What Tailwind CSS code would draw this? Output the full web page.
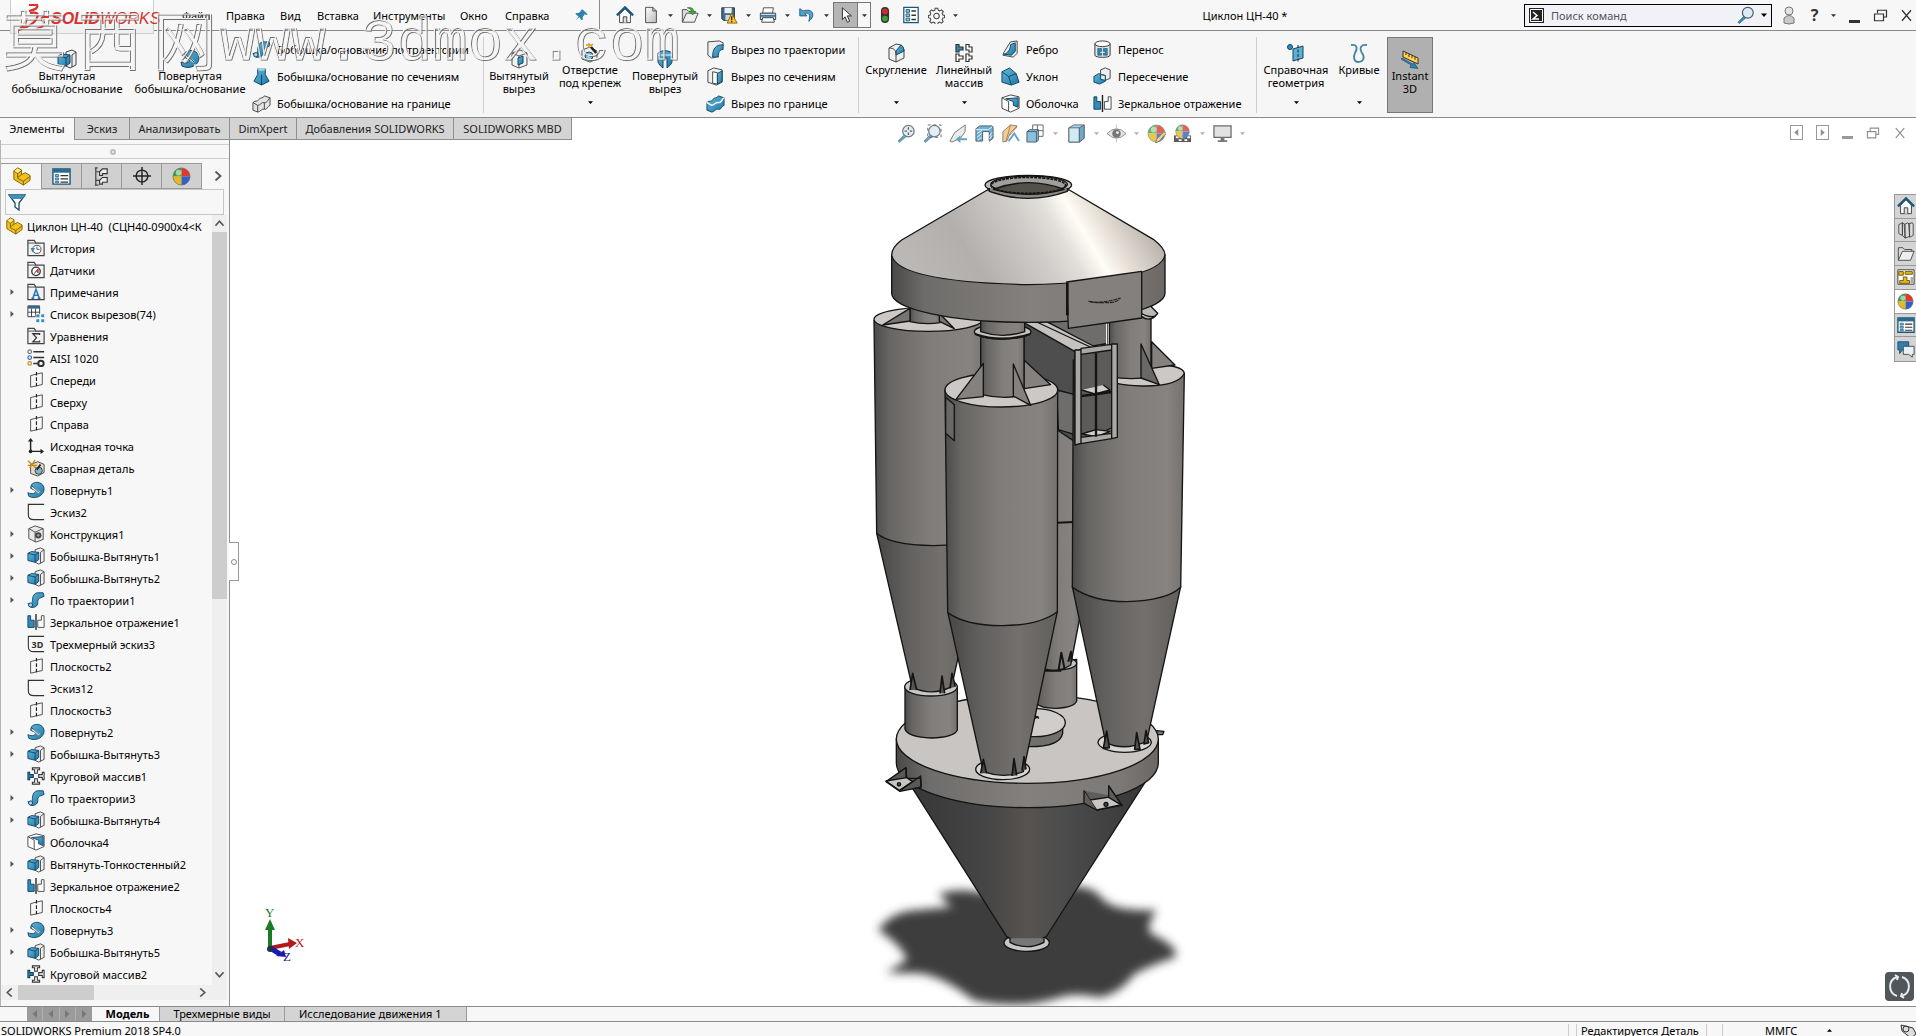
<!DOCTYPE html>
<html lang="ru">
<head>
<meta charset="utf-8">
<title>SOLIDWORKS — Циклон ЦН-40</title>
<script src="https://cdn.jsdelivr.net/npm/@tailwindcss/browser@4"></script>
</head>
<body class="h-screen overflow-hidden flex flex-col bg-white text-black text-[11px] leading-[13px] font-['Noto_Sans','Open_Sans',sans-serif]">

<svg class="absolute size-0" aria-hidden="true">
  <defs>
    <linearGradient id="blue" x1="0" y1="0" x2="1" y2="1"><stop offset="0" stop-color="#62b8dc"/><stop offset="1" stop-color="#1f78a8"/></linearGradient>
    <linearGradient id="grey" x1="0" y1="0" x2="1" y2="1"><stop offset="0" stop-color="#fff"/><stop offset="1" stop-color="#b9b9b9"/></linearGradient>
  </defs>
  <symbol id="part" viewBox="0 0 20 20"><path d="M2 4l4-3 4 2v5l4-2 5 3v5l-7 5-10-6z" fill="#f2c21c" stroke="#7d5d00"/><path d="M2 4l4 3v5l6 3 7-5M6 7l4-3M12 15v4M10 8l-4 3" fill="none" stroke="#7d5d00"/><path d="M2.500 4L6 1.600 9.500 3.300 6 6.300z" fill="#ffe682"/></symbol>
  <symbol id="home" viewBox="0 0 20 20"><path d="M4 9v9.500h12V9l-6-6z" fill="#fff" stroke="#333"/><path d="M1 10.500L10 1.500l9 9" fill="none" stroke="#1d5878" stroke-width="2.600"/><path d="M8 18.500V12h4v6.500" fill="#ddd" stroke="#333"/></symbol>
  <symbol id="new" viewBox="0 0 20 20"><path d="M4 1.500h8l4 4v13H4z" fill="url(#grey)" stroke="#444"/><path d="M12 1.500v4h4" fill="none" stroke="#444"/></symbol>
  <symbol id="open" viewBox="0 0 20 20"><path d="M1.500 18V4h5l2 2h7v3" fill="#ddd" stroke="#444"/><path d="M1.500 18L6 8h13l-4 10z" fill="#eee" stroke="#444"/><path d="M7 2c5-1 7 1 7 4h2.500L13 10 9 6h2.500C11 4 10 3 7 2z" fill="#44a83a" stroke="#1d6a17" stroke-width=".6"/></symbol>
  <symbol id="save" viewBox="0 0 20 20"><path d="M2 2h14v14H4l-2-2z" fill="#3c6e90" stroke="#223"/><path d="M5 2h8v6H5z" fill="#eee"/><path d="M6 10h6v6H6z" fill="#cfd8de"/><path d="M13 8l6 11H8z" fill="#ffc629" stroke="#8a5f00"/><path d="M13 11.500v4M13 16.500v1.500" stroke="#222" stroke-width="1.400"/></symbol>
  <symbol id="print" viewBox="0 0 20 20"><path d="M5 2h11l-1 6H4z" fill="#fff" stroke="#444"/><path d="M1.500 8h17v7h-17z" fill="#cfdbe2" stroke="#333"/><path d="M2 10h16v2H2z" fill="#2f81ad"/><path d="M4 13h12l1 5H3z" fill="#fff" stroke="#333"/></symbol>
  <symbol id="undo" viewBox="0 0 20 20"><path d="M2 3v8h8L7.500 8.500c4-2 7 1 4.500 8.500 8-6 5-15-6.500-11.500z" fill="#4fa3ce" stroke="#1d5878"/></symbol>
  <symbol id="cursor" viewBox="0 0 20 20"><path d="M6 2v13l3-3 2.500 6 2.500-1-2.500-6H16z" fill="#fff" stroke="#222"/></symbol>
  <symbol id="traffic" viewBox="0 0 20 20"><rect x="5.500" y="1" width="9" height="18" rx="4.500" fill="#333"/><circle cx="10" cy="6" r="3.200" fill="#d32b2b"/><circle cx="10" cy="14" r="3.200" fill="#35a43a"/></symbol>
  <symbol id="list" viewBox="0 0 20 20"><path d="M2 1.500h16v17H2z" fill="#fff" stroke="#1d5878" stroke-width="1.400"/><path d="M4.500 4h4v3h-4zM4.500 8.800h4v3h-4zM4.500 13.500h4v3h-4z" fill="#8cc5df" stroke="#1d5878"/><path d="M10.500 5.500h5M10.500 10.300h5M10.500 15h5" stroke="#333" stroke-width="1.500"/></symbol>
  <symbol id="props" viewBox="0 0 20 20"><path d="M1 2h18v16H1z" fill="#fff" stroke="#1d5878" stroke-width="1.500"/><path d="M1 2h18v4H1z" fill="#2a6a8e"/><path d="M3.500 8h3.500v2H3.500zM3.500 11.500h3.500v2H3.500zM3.500 15h3.500v1.500H3.500z" fill="#8cc5df" stroke="#1d5878" stroke-width=".8"/><path d="M9 9h8M9 12.500h8M9 15.800h8" stroke="#333" stroke-width="1.300"/></symbol>
  <symbol id="gear" viewBox="0 0 20 20"><path d="M8.500 1.500h3l.6 2.400 1.700.8 2.200-1.300 2 2-1.300 2.200.8 1.800 2 .5v2.600l-2.200.6-.7 1.800 1.300 2.100-2 2-2.200-1.200-1.700.7-.5 2.200h-3l-.6-2.200-1.700-.7-2.100 1.200-2-2 1.200-2.100-.7-1.800-2.200-.6V9.900l2.200-.5.7-1.800-1.200-2.200 2-2 2.100 1.300 1.700-.8z" fill="none" stroke="#444" stroke-width="1.200"/><circle cx="10" cy="10.500" r="3.200" fill="none" stroke="#444" stroke-width="1.200"/></symbol>
  <symbol id="extrude" viewBox="0 0 20 20"><path d="M9 3l6-2 4 2v13l-6 3-4-2z" fill="#eee" stroke="#444"/><path d="M15 6l4-3M15 6v12" stroke="#444" fill="none"/><path d="M1 7l4-2 8 1v8l-4 3-8-2z" fill="url(#blue)" stroke="#134560"/><path d="M1 7l8 2v8M9 9l4-3" fill="none" stroke="#134560"/></symbol>
  <symbol id="cutext" viewBox="0 0 20 20"><path d="M3 4l8-3 7 3v12l-8 3-7-3z" fill="#f3f3f3" stroke="#555"/><path d="M3 4l7 3v12M10 7l8-3" fill="none" stroke="#555"/><path d="M9 9l5-2v7l-5 2z" fill="url(#blue)" stroke="#134560"/></symbol>
  <symbol id="revolve" viewBox="0 0 20 20"><path d="M5 4c5-5 14-2 14 5 0 7-9 12-17 8l-1-4c5 2 8 1 9-2L4 8z" fill="url(#blue)" stroke="#134560"/><path d="M6 7l8 6" stroke="#fff" stroke-width="2"/><path d="M5 5l9 8" stroke="#333" stroke-width="1"/></symbol>
  <symbol id="sweep" viewBox="0 0 20 20"><path d="M1 14c4 1 5 0 5-3 0-5 2-9 6-9h6l1 4-5 2c-2 1-2 3-2 5 0 4-4 6-8 5z" fill="url(#blue)" stroke="#134560"/><circle cx="4" cy="15.500" r="2.300" fill="#9bd3ea" stroke="#134560"/></symbol>
  <symbol id="loft" viewBox="0 0 20 20"><path d="M6 2h8v6l4 7-8 4-8-4 4-7z" fill="url(#blue)" stroke="#134560"/><ellipse cx="10" cy="2.500" rx="4" ry="1.500" fill="#9bd3ea"/><path d="M10 8v11" stroke="#134560"/></symbol>
  <symbol id="boundary" viewBox="0 0 20 20"><path d="M1 9c3-3 4 0 6-3s5-1 6-4l6 2v8c-3 1-3 5-6 4s-4 3-7 3l-5-2z" fill="#e4e4e4" stroke="#444"/><path d="M1 9l5 3c3 0 4-4 7-3s4-4 6-5M6 12v7M13 9v7" fill="none" stroke="#444"/></symbol>
  <symbol id="hole" viewBox="0 0 20 20"><path d="M2 7l8-3 7 4v8l-7 3-8-3z" fill="#eee" stroke="#555"/><circle cx="9" cy="13" r="4" fill="#6fbbdc" stroke="#134560"/><circle cx="9" cy="13" r="1.500" fill="#fff"/><path d="M11 4l6 7" stroke="#222" stroke-width="2.400"/><path d="M9 0v5M6 2h6M13 1l-2 2" stroke="#e69a1a" stroke-width="1.300"/></symbol>
  <symbol id="cutrev" viewBox="0 0 20 20"><path d="M3 4c3-3 11-3 14 0v9c-1 3-3 4-5 6V9H8v10c-3-2-4-4-5-6z" fill="url(#blue)" stroke="#134560"/><path d="M3 6h14" stroke="#fff"/></symbol>
  <symbol id="cutsweep" viewBox="0 0 20 20"><path d="M2 2l12-1 4 2v3c-6 0-8 5-8 12l-4 1-4-3z" fill="#f0f0f0" stroke="#444"/><path d="M7 18c0-9 3-13 11-13v5c-4 0-5 3-5 8z" fill="url(#blue)" stroke="#134560"/></symbol>
  <symbol id="cutloft" viewBox="0 0 20 20"><path d="M2 4l6-3 9 2v13l-6 3-9-3z" fill="#f0f0f0" stroke="#444"/><path d="M7 5l5 1v12l-5-1z" fill="#fff" stroke="#444"/><path d="M12 7l5-3v11l-5 3z" fill="url(#blue)" stroke="#134560"/></symbol>
  <symbol id="cutbound" viewBox="0 0 20 20"><path d="M1 9c3-3 4 0 6-3s5-1 6-4l6 2v8c-3 1-3 5-6 4s-4 3-7 3l-5-2z" fill="url(#blue)" stroke="#134560"/><path d="M1 9l5 3c3 0 4-4 7-3s4-4 6-5" fill="none" stroke="#fff" stroke-width="1.500"/></symbol>
  <symbol id="fillet" viewBox="0 0 20 20"><path d="M3 5l7-4 5 1c2 1 3 4 3 6v7l-8 4-7-3z" fill="#f0f0f0" stroke="#444"/><path d="M10 8l5-6c2 1 3 4 3 6l-8 4z" fill="url(#blue)" stroke="#134560"/><path d="M3 5c5 0 7 2 7 7v7" fill="none" stroke="#444"/></symbol>
  <symbol id="pattern" viewBox="0 0 20 20"><g fill="#fff" stroke="#333" stroke-width="1.200"><path d="M2 1.500h3v2.500h4v3H5v2H2z" fill="#2f8dbb"/><path d="M12 1.500h3v2.500h3v5h-3V7h-3zM2 11h3v2h4v3H5v2.500H2zM12 11h3v2h3v3h-3v2.500h-3z"/></g></symbol>
  <symbol id="rib" viewBox="0 0 20 20"><path d="M10 2l7-1v13l-4 4-11-2 1-3z" fill="#eee" stroke="#444"/><path d="M10 5c0 5-3 9-7 10l8 1 4-4V3z" fill="url(#blue)" stroke="#134560"/></symbol>
  <symbol id="draft" viewBox="0 0 20 20"><path d="M1 5l8-4 7 6 3 9-8 3-10-3z" fill="url(#blue)" stroke="#134560"/><path d="M1 5l7 5 3 9M8 10l8-3" fill="none" stroke="#134560"/></symbol>
  <symbol id="shell" viewBox="0 0 20 20"><path d="M1 4l9-3 9 2v12l-9 4-9-4z" fill="#fff" stroke="#444"/><path d="M5 5l13-1v10l-5-2V8z" fill="url(#blue)" stroke="#134560"/><path d="M1 4l7 4v10" fill="none" stroke="#444"/></symbol>
  <symbol id="wrap" viewBox="0 0 20 20"><path d="M2 4v12c0 3 16 3 16 0V4z" fill="#dfe6ea" stroke="#333"/><ellipse cx="10" cy="4" rx="8" ry="3" fill="#fff" stroke="#333"/><path d="M5 9h4v3H7v2h2v2H5zM11 9h4v7h-4v-2h2v-2h-2z" fill="#2f8dbb" stroke="#134560" stroke-width=".6"/></symbol>
  <symbol id="intersect" viewBox="0 0 20 20"><path d="M8 3l5-2 5 2v9l-5 2-5-2z" fill="#eee" stroke="#444"/><path d="M1 10l5-3 7 2v6l-6 3-6-2z" fill="url(#blue)" stroke="#134560"/><path d="M8 8l5 1v5l-5-1z" fill="#d6eef8" stroke="#134560"/></symbol>
  <symbol id="mirror" viewBox="0 0 20 20"><path d="M1 3h3v5h4v8H1z" fill="#2f8dbb" stroke="#134560"/><path d="M10 1v18" stroke="#222" stroke-width="1.500"/><path d="M19 3h-3v5h-4v8h7z" fill="#fff" stroke="#444"/></symbol>
  <symbol id="refgeo" viewBox="0 0 20 20"><circle cx="4" cy="4" r="2.500" fill="#2f8dbb" stroke="#134560"/><path d="M7 6l10-3v12L7 18z" fill="#5db0d6" stroke="#134560"/><path d="M12 2v17" stroke="#222" stroke-dasharray="3 1.500"/></symbol>
  <symbol id="curves" viewBox="0 0 20 20"><path d="M2 2c6-1 7 3 4 8-2 4-1 9 3 9 6 0 7-5 4-9-3-5-1-9 5-8" fill="none" stroke="#4785a3" stroke-width="1.800"/></symbol>
  <symbol id="instant" viewBox="0 0 20 20"><path d="M3 2l15 7v6L3 8z" fill="#ffd34e" stroke="#333"/><path d="M6 3.500V6M9 5v3M12 6.300V9M15 7.700v3" stroke="#333"/><path d="M1 10l10 6-1 2.500 8 1-4-6-1.500 1.500L2 9z" fill="#2f81ad" stroke="#134560" stroke-width=".6"/></symbol>
  <symbol id="circular" viewBox="0 0 20 20"><g stroke-width="1.200"><path d="M1 6h2v2.500h4v3H3V14H1z" fill="#2f8dbb" stroke="#134560"/><g fill="#fff" stroke="#333"><path d="M19 6h-2v2.500h-4v3h4V14h2zM6 1v2h2.500v4h3V3H14V1zM6 19v-2h2.500v-4h3v4H14v2z"/></g></g></symbol>
  <symbol id="plane" viewBox="0 0 20 20"><path d="M4 5l13-3v13L4 18z" fill="none" stroke="#444"/><path d="M10.500 1v18" stroke="#222" stroke-width="1.300" stroke-dasharray="4 2"/></symbol>
  <symbol id="origin" viewBox="0 0 20 20"><path d="M4 3v13h13" fill="none" stroke="#222" stroke-width="1.600"/><path d="M1 5l3-4 3 4zM15 13l4 3-4 3z" fill="#222"/><circle cx="4" cy="16" r="2" fill="#222"/></symbol>
  <symbol id="sketch" viewBox="0 0 20 20"><path d="M19 1.500H1.500V13q0 5.500 6 5.500H19" fill="none" stroke="#333" stroke-width="1.300"/></symbol>
  <symbol id="sketch3d" viewBox="0 0 20 20"><path d="M19 1.500H1.500V13q0 5.500 6 5.500H19" fill="none" stroke="#333" stroke-width="1.200"/><text x="5" y="14" font-size="10" font-weight="bold" fill="#333">3D</text></symbol>
  <symbol id="weld" viewBox="0 0 20 20"><path d="M4 6l8-3 7 3v9l-7 4-8-3z" fill="#e3d9c6" stroke="#444"/><circle cx="13" cy="13" r="4" fill="#7db8d6" stroke="#333"/><path d="M1 2l9 8M9 1L3 10M1 7h10" stroke="#c98a16" stroke-width="1.500"/><path d="M11 12l4-6" stroke="#222" stroke-width="2"/></symbol>
  <symbol id="construct" viewBox="0 0 20 20"><path d="M2 4l7-3 9 3v12l-8 3-8-4z" fill="#e9e9e9" stroke="#444"/><path d="M2 4l7 4v11M9 8l9-4" fill="none" stroke="#444"/><circle cx="12.500" cy="11.500" r="3.500" fill="#444"/><circle cx="12.500" cy="11.500" r="1.500" fill="#999"/></symbol>
  <symbol id="folder" viewBox="0 0 20 20"><path d="M1 18.500V1.500h7l2 3h9v14z" fill="#f2f2f2" stroke="#444" stroke-width="1.300"/><path d="M1 4.500h9" stroke="#444"/></symbol>
  <symbol id="history" viewBox="0 0 20 20"><use href="#folder"/><circle cx="11" cy="11.500" r="4.500" fill="#fff" stroke="#444"/><path d="M11 8.500v3h3" stroke="#444" fill="none"/><path d="M4 10l5 0-3 5z" fill="#2f8dbb"/></symbol>
  <symbol id="sensor" viewBox="0 0 20 20"><use href="#folder"/><circle cx="10" cy="11.500" r="4.700" fill="#fff" stroke="#333" stroke-width="1.500"/><path d="M8 14l4-5" stroke="#333"/><path d="M13 8v6l-3-2z" fill="#d33"/></symbol>
  <symbol id="notes" viewBox="0 0 20 20"><use href="#folder"/><path d="M5 17h3M12 17h3M6.500 17L10 7l3.700 10M7.500 13.500h5" fill="none" stroke="#2678b0" stroke-width="1.700"/></symbol>
  <symbol id="equation" viewBox="0 0 20 20"><use href="#folder"/><path d="M14 9V7.500H6.500l4 4.500-4 4.500H14V15" fill="none" stroke="#333" stroke-width="1.400"/></symbol>
  <symbol id="cutlist" viewBox="0 0 20 20"><path d="M1 1h13v12H1z" fill="#fff" stroke="#333"/><path d="M1 1h13v3H1z" fill="#2a6a8e"/><path d="M1 8h13M5 4v9M9.500 4v9" stroke="#333"/><path d="M10 10h4v4h-4zM15.500 10h4v4h-4zM10 15.500h4v4h-4zM15.500 15.500h4v4h-4z" fill="#2f8dbb" stroke="#fff" stroke-width=".7"/></symbol>
  <symbol id="material" viewBox="0 0 20 20"><g fill="none" stroke-width="1.300"><circle cx="3" cy="3" r="2" stroke="#777"/><circle cx="3" cy="9.500" r="2" stroke="#2a6ac0"/><circle cx="3" cy="16" r="2" stroke="#c98a16"/></g><path d="M7 3h12M7 9.500h12M7 16h5" stroke="#333" stroke-width="1.700"/><circle cx="15.500" cy="16" r="3" fill="none" stroke="#333" stroke-width="2.200"/></symbol>
  <symbol id="config" viewBox="0 0 20 20"><path d="M4 1v18M4 5h5M4 14h5M3 19h4M3 1h3" stroke="#444" stroke-width="1.300" fill="none"/><path d="M8 5l3-3h5v5h-5v2H8zM8 14l3-3h5v5h-5v2H8z" fill="#eee" stroke="#333" stroke-width="1.200"/></symbol>
  <symbol id="target" viewBox="0 0 20 20"><circle cx="10" cy="10" r="6.500" fill="none" stroke="#222" stroke-width="1.600"/><path d="M10 0v20M0 10h20" stroke="#222" stroke-width="1.600"/></symbol>
  <symbol id="ball" viewBox="0 0 20 20"><path d="M10 10V1a9 9 0 0 0-9 9z" fill="#35a043"/><path d="M10 10H1a9 9 0 0 0 9 9z" fill="#e8b820"/><path d="M10 10V1a9 9 0 0 1 9 9z" fill="#e0392c"/><path d="M10 10h9a9 9 0 0 1-9 9z" fill="#2d63c8"/><circle cx="10" cy="10" r="9" fill="none" stroke="#555" stroke-width=".6"/><circle cx="7" cy="6" r="3" fill="#fff" opacity=".55"/></symbol>
  <symbol id="mag" viewBox="0 0 20 20"><circle cx="12" cy="7.500" r="6" fill="#dcebf3" stroke="#4b5a63" stroke-width="1.300"/><path d="M7.500 11.500L1 18l1.500 1.500L9.500 13.500z" fill="#3f8db4" stroke="#2a5f7c" stroke-width=".7"/></symbol>
  <symbol id="zoomfit" viewBox="0 0 20 20"><use href="#mag"/><path d="M12 3.500v8M8 7.500h8" stroke="#333" stroke-width="1.400" stroke-dasharray="2.500 3"/></symbol>
  <symbol id="zoomarea" viewBox="0 0 20 20"><use href="#mag"/><path d="M5 1h14v13H5z" fill="none" stroke="#444" stroke-dasharray="3 3"/></symbol>
  <symbol id="prevview" viewBox="0 0 20 20"><path d="M17 1L6 9l-5 9 2 1 9-4 5-7z" fill="#e7e7e7" stroke="#555"/><path d="M19 15h-7v-3l-5 4 5 4v-3h7z" fill="#3f8db4"/></symbol>
  <symbol id="section" viewBox="0 0 20 20"><path d="M1 5l4-3h13l1 1v12l-4 3V8H8v10H1z" fill="#4c9ec6" stroke="#234"/><path d="M1 6h13l4-3M2 10l5-3M2 14l5-4M3 17l4-3M15 13l3-4M15 16l3-4" fill="none" stroke="#e6f4fa"/></symbol>
  <symbol id="dynview" viewBox="0 0 20 20"><path d="M2 8l8-7 7 1-7 7-4 9-4 1z" fill="#f0c27a" stroke="#665"/><path d="M8 18l6-8 5 8" fill="none" stroke="#3f8db4" stroke-width="2"/><path d="M10 1L5 19M17 3L9 12" stroke="#b5542b"/></symbol>
  <symbol id="vieworient" viewBox="0 0 20 20"><path d="M7 1h11v12H7z" fill="#fff" stroke="#345"/><path d="M7 7h11M12 1v12" stroke="#345"/><path d="M1 8l3-2h9v11l-2 2H1z" fill="#6bb4d5" stroke="#234"/><path d="M1 8h10v11M11 8l2-2" fill="none" stroke="#234"/></symbol>
  <symbol id="display" viewBox="0 0 20 20"><path d="M2 4l5-3h11v14l-5 4H2z" fill="#9bcfe4" stroke="#345"/><path d="M2 4h11v15H2z" fill="#c7e5f1" stroke="#345"/><path d="M13 4l5-3v14l-5 4z" fill="#4b97bb" stroke="#345"/></symbol>
  <symbol id="eye" viewBox="0 0 20 20"><path d="M0 10q10-10 20 0-10 10-20 0z" fill="#ddd" stroke="#777"/><circle cx="10" cy="10" r="4.500" fill="#555"/><circle cx="11" cy="9" r="1.500" fill="#eee"/><path d="M10 1v3M10 16v3" stroke="#aaa"/></symbol>
  <symbol id="appear" viewBox="0 0 20 20"><use href="#ball"/><path d="M18 8l-8 8-1 4 4-2 7-8z" fill="#f4c65a" stroke="#555"/></symbol>
  <symbol id="scene" viewBox="0 0 20 20"><path d="M1 12h18v7H1z" fill="#333"/><path d="M3 13h3v2H3zM9 13h3v2H9zM15 13h3v2h-3zM6 16h3v2H6zM12 16h3v2h-3z" fill="#fff"/><g transform="translate(2 0) scale(.8)"><use href="#ball" width="20" height="20"/></g></symbol>
  <symbol id="monitor" viewBox="0 0 20 20"><path d="M1 2h18v12H1z" fill="#dcdcdc" stroke="#444" stroke-width="1.300"/><path d="M8 14h4v3h3v2H5v-2h3z" fill="#555"/></symbol>
  <symbol id="library" viewBox="0 0 20 20"><path d="M2 4l4-2v14l-4-2zM6 2l3 2v15l-3-3zM8 4l4-2 2 2v13l-5 2zM13 3l4-1 1 2v12l-4 2z" fill="#ddd" stroke="#444"/></symbol>
  <symbol id="explorer" viewBox="0 0 20 20"><path d="M1.500 17V3h5l2 2h8v3" fill="#ddd" stroke="#444"/><path d="M1.500 17L6 7h13l-4 10z" fill="#eee" stroke="#444"/></symbol>
  <symbol id="palette" viewBox="0 0 20 20"><path d="M1 2h18v16H1z" fill="#fff" stroke="#333"/><path d="M2 4h5v4H2zM9 4h8v3H9zM3 14h4v-4h4v4h3v3H3z" fill="#e9b923" stroke="#6b5200"/><path d="M15 10h3v7h-3z" fill="#aaa"/></symbol>
  <symbol id="forum" viewBox="0 0 20 20"><path d="M1 2h12v9H6l-3 4v-4H1z" fill="#2f81ad" stroke="#1d4b66"/><path d="M7 7h12v9h-2v3l-4-3H7z" fill="#e8f1f5" stroke="#444"/></symbol>
  <symbol id="pin" viewBox="0 0 20 20"><path d="M11 2l7 7-2 1-2-1-3 4v4l-2 0-3-4-5 5 4-6-4-3v-2h4l4-3-1-1z" fill="#2f81ad"/></symbol>
  <symbol id="restore" viewBox="0 0 20 20"><path d="M6 7V3h12v9h-4" fill="none" stroke="currentColor" stroke-width="1.600"/><path d="M2 8h12v9H2z" fill="none" stroke="currentColor" stroke-width="1.600"/></symbol>
  <symbol id="cross" viewBox="0 0 20 20"><path d="M4 3l12 14M16 3L4 17" stroke="currentColor" stroke-width="1.700"/></symbol>
  <symbol id="tri" viewBox="0 0 8 8"><path d="M0 2h8L4 6.500z" fill="currentColor"/></symbol>
  <symbol id="chev" viewBox="0 0 10 10"><path d="M2.500 0.500L7.500 5l-5 4.500" fill="none" stroke="currentColor" stroke-width="1.800"/></symbol>
</svg>

<!-- Title bar -->
<header class="h-[31px] shrink-0 flex items-center bg-[#f7f7f7] border-b border-[#8a8a8a]">
  <div class="ml-[10px] w-[144px] h-[34px] self-start shrink-0 bg-gradient-to-b from-white to-[#efefef] border-x border-b border-[#cfcfcf] flex items-center pl-[6px] pt-1 z-10">
    <svg class="w-[34px] h-[30px] shrink-0" viewBox="0 0 34 30" fill="none" stroke="#d9312b" stroke-width="2.200"><path d="M12 1h8q2 4-8 6M13 9q10-2 7 5-3 7-18 12 7-6 8-12M32 13q-9-1-7 3 6 6-6 9"/></svg>
    <span class="text-[16px] leading-5 italic text-[#d9312b] font-['Liberation_Sans',sans-serif]"><b>SOLID</b>WORKS</span>
  </div>
  <nav class="flex items-center ml-[28px] gap-4">
    <a href="#" class="w-[28px]">Файл</a><a href="#" class="w-[38px]">Правка</a><a href="#" class="w-[21px]">Вид</a><a href="#" class="w-[40px]">Вставка</a><a href="#" class="w-[71px]">Инструменты</a><a href="#" class="w-[29px]">Окно</a><a href="#" class="w-[46px]">Справка</a>
  </nav>
  <button class="ml-6 size-[14px]" aria-label="Закрепить"><svg class="size-[14px]"><use href="#pin"/></svg></button>
  <div class="ml-[10px] h-[31px] w-px bg-[#8a8a8a]"></div>
  <div class="flex items-center ml-4 text-[#333]">
    <button class="size-[18px]" aria-label="Домой"><svg class="size-[18px]"><use href="#home"/></svg></button>
    <button class="flex items-center ml-2 gap-2" aria-label="Создать"><svg class="size-[18px]"><use href="#new"/></svg><svg class="size-[5px]"><use href="#tri"/></svg></button>
    <button class="flex items-center ml-2 gap-2" aria-label="Открыть"><svg class="size-[18px]"><use href="#open"/></svg><svg class="size-[5px]"><use href="#tri"/></svg></button>
    <button class="flex items-center ml-2 gap-2" aria-label="Сохранить"><svg class="size-[18px]"><use href="#save"/></svg><svg class="size-[5px]"><use href="#tri"/></svg></button>
    <button class="flex items-center ml-2 gap-2" aria-label="Печать"><svg class="size-[18px]"><use href="#print"/></svg><svg class="size-[5px]"><use href="#tri"/></svg></button>
    <button class="flex items-center ml-2 gap-2" aria-label="Отменить"><svg class="size-[18px]"><use href="#undo"/></svg><svg class="size-[5px]"><use href="#tri"/></svg></button>
    <button class="flex items-stretch ml-1 h-[26px] border border-[#777]" aria-label="Выбрать"><span class="w-[23px] bg-[#b5b5b5] flex items-center justify-center"><svg class="size-[18px]"><use href="#cursor"/></svg></span><span class="w-[13px] flex items-center justify-center border-l border-[#777]"><svg class="size-[5px]"><use href="#tri"/></svg></span></button>
    <button class="ml-[5px] size-[18px]" aria-label="Перестроить"><svg class="size-[18px]"><use href="#traffic"/></svg></button>
    <button class="ml-2 size-[18px]" aria-label="Свойства файла"><svg class="size-[18px]"><use href="#list"/></svg></button>
    <button class="flex items-center ml-2 gap-2" aria-label="Параметры"><svg class="size-[17px]"><use href="#gear"/></svg><svg class="size-[5px]"><use href="#tri"/></svg></button>
  </div>
  <h1 class="flex-1 pl-2 text-center">Циклон ЦН-40 *</h1>
  <label class="flex items-center h-[23px] w-[248px] border border-black bg-[#f1f1f8] pl-1 pr-1 mr-2">
    <svg class="size-[15px]" viewBox="0 0 15 15"><path d="M0 0h15v15H0z" fill="#222"/><path d="M1.500 1.500h12v12h-12z" fill="none" stroke="#fff"/><path d="M4 4l4 3.500L4 11h6" fill="none" stroke="#fff" stroke-width="1.500"/></svg>
    <input class="flex-1 min-w-0 pl-[7px] bg-transparent outline-none placeholder:text-[#555]" placeholder="Поиск команд" aria-label="Поиск команд">
    <svg class="size-[18px]"><use href="#mag"/></svg><svg class="size-[6px] ml-[6px]"><use href="#tri"/></svg>
  </label>
  <div class="flex items-center shrink-0 text-[#333]">
    <button class="w-[18px]" aria-label="Вход"><svg class="w-[18px] h-[19px]" viewBox="0 0 18 19"><circle cx="9" cy="5" r="4" fill="#e3e3e3" stroke="#777"/><path d="M4 17V12q5-5 10 0v5q-5 2-10 0z" fill="#c9c9c9" stroke="#777"/></svg></button>
    <button class="w-[33px] text-[16px] leading-5 font-bold" aria-label="Справка">?</button>
    <button class="w-[6px]" aria-label="Меню справки"><svg class="size-[5px]"><use href="#tri"/></svg></button>
    <button class="ml-[12px] w-[11px] h-[15px] border-b-3 border-[#333]" aria-label="Свернуть"></button>
    <button class="ml-[13px] size-[15px]" aria-label="Восстановить"><svg class="size-[15px]"><use href="#restore"/></svg></button>
    <button class="ml-[11px] mr-[2px] size-[15px]" aria-label="Закрыть"><svg class="size-[15px]"><use href="#cross"/></svg></button>
  </div>
</header>

<!-- Ribbon -->
<section class="h-[87px] shrink-0 flex pt-[6px] pb-1 bg-[#f6f6f6] border-b border-[#8a8a8a]">
  <div class="flex w-[484px] pl-1 border-r border-[#cfcfcf]">
    <button class="w-[126px] flex flex-col items-center pt-3"><svg class="size-5"><use href="#extrude"/></svg><span>Вытянутая<br>бобышка/основание</span></button>
    <button class="w-[120px] flex flex-col items-center pt-3"><svg class="size-5"><use href="#revolve"/></svg><span class="whitespace-nowrap">Повернутая<br>бобышка/основание</span></button>
    <div class="flex flex-col justify-between whitespace-nowrap pl-[2px] pt-[3px]">
      <button class="flex items-center gap-[6px]"><svg class="size-[19px]"><use href="#sweep"/></svg>Бобышка/основание по траектории</button>
      <button class="flex items-center gap-[6px]"><svg class="size-[19px]"><use href="#loft"/></svg>Бобышка/основание по сечениям</button>
      <button class="flex items-center gap-[6px]"><svg class="size-[19px]"><use href="#boundary"/></svg>Бобышка/основание на границе</button>
    </div>
  </div>
  <div class="flex w-[375px] border-r border-[#cfcfcf]">
    <button class="w-[70px] flex flex-col items-center pt-3"><svg class="size-5"><use href="#cutext"/></svg><span>Вытянутый<br>вырез</span></button>
    <button class="w-[72px] flex flex-col items-center pt-[6px] pb-2"><svg class="size-5"><use href="#hole"/></svg><span class="whitespace-nowrap">Отверстие<br>под крепеж</span><svg class="size-[5px] mt-auto"><use href="#tri"/></svg></button>
    <button class="w-[78px] flex flex-col items-center pt-3"><svg class="size-5"><use href="#cutrev"/></svg><span>Повернутый<br>вырез</span></button>
    <div class="flex flex-col justify-between whitespace-nowrap pl-[2px] pt-[3px]">
      <button class="flex items-center gap-[6px]"><svg class="size-[19px]"><use href="#cutsweep"/></svg>Вырез по траектории</button>
      <button class="flex items-center gap-[6px]"><svg class="size-[19px]"><use href="#cutloft"/></svg>Вырез по сечениям</button>
      <button class="flex items-center gap-[6px]"><svg class="size-[19px]"><use href="#cutbound"/></svg>Вырез по границе</button>
    </div>
  </div>
  <div class="flex w-[398px] border-r border-[#cfcfcf]">
    <button class="w-[74px] flex flex-col items-center pt-[6px] pb-2"><svg class="size-5"><use href="#fillet"/></svg><span>Скругление</span><svg class="size-[5px] mt-auto"><use href="#tri"/></svg></button>
    <button class="w-[62px] flex flex-col items-center pt-[6px] pb-2"><svg class="size-5"><use href="#pattern"/></svg><span>Линейный<br>массив</span><svg class="size-[5px] mt-auto"><use href="#tri"/></svg></button>
    <div class="flex flex-col justify-between whitespace-nowrap w-[98px] pl-[6px] pt-[3px]">
      <button class="flex items-center gap-[6px]"><svg class="size-[19px]"><use href="#rib"/></svg>Ребро</button>
      <button class="flex items-center gap-[6px]"><svg class="size-[19px]"><use href="#draft"/></svg>Уклон</button>
      <button class="flex items-center gap-[6px]"><svg class="size-[19px]"><use href="#shell"/></svg>Оболочка</button>
    </div>
    <div class="flex flex-col justify-between whitespace-nowrap pt-[3px]">
      <button class="flex items-center gap-[6px]"><svg class="size-[19px]"><use href="#wrap"/></svg>Перенос</button>
      <button class="flex items-center gap-[6px]"><svg class="size-[19px]"><use href="#intersect"/></svg>Пересечение</button>
      <button class="flex items-center gap-[6px]"><svg class="size-[19px]"><use href="#mirror"/></svg>Зеркальное отражение</button>
    </div>
  </div>
  <div class="flex">
    <button class="w-[78px] flex flex-col items-center pt-[6px] pb-2"><svg class="size-5"><use href="#refgeo"/></svg><span>Справочная<br>геометрия</span><svg class="size-[5px] mt-auto"><use href="#tri"/></svg></button>
    <button class="w-[48px] flex flex-col items-center pt-[6px] pb-2"><svg class="size-5"><use href="#curves"/></svg><span>Кривые</span><svg class="size-[5px] mt-auto"><use href="#tri"/></svg></button>
    <button class="ml-1 w-[46px] flex flex-col items-center pt-[11px] bg-[#b0b0b0] border border-[#777]"><svg class="size-5"><use href="#instant"/></svg><span>Instant<br>3D</span></button>
  </div>
</section>

<!-- Work area -->
<main class="relative flex-1 min-h-0 flex flex-col bg-white">
  <div class="flex h-[22px] shrink-0">
    <div class="flex leading-[20px] text-[#222] text-center whitespace-nowrap">
      <button class="w-[74px] bg-[#f7f7f7] font-medium">Элементы</button>
      <button class="w-[56px] bg-[#d4d4d4] border border-t-0 border-[#8f8f8f]">Эскиз</button>
      <button class="w-[100px] bg-[#d4d4d4] border-r border-b border-[#8f8f8f]">Анализировать</button>
      <button class="w-[67px] bg-[#d4d4d4] border-r border-b border-[#8f8f8f]">DimXpert</button>
      <button class="w-[157px] bg-[#d4d4d4] border-r border-b border-[#8f8f8f]">Добавления SOLIDWORKS</button>
      <button class="w-[118px] bg-[#d4d4d4] border-r border-b border-[#8f8f8f]">SOLIDWORKS MBD</button>
    </div>
  </div>

  <div class="flex flex-1 min-h-0">
    <aside class="w-[230px] shrink-0 flex flex-col bg-[#f7f7f7] border-r border-[#8f8f8f] border-l border-l-[#b5b5b5]">
      <div class="mt-1 h-[15px] shrink-0 border-y border-[#cfcfcf] flex items-center justify-center"><span class="size-[6px] rounded-full border-2 border-[#bbb] -ml-1"></span></div>
      <div class="mt-1 h-[26px] flex items-stretch shrink-0">
        <button class="w-[40px] flex items-center justify-center border-t border-[#999]" aria-label="Дерево"><svg class="size-[19px]"><use href="#part"/></svg></button>
        <button class="w-[41px] flex items-center justify-center bg-[#d0d0d0] border border-[#999]" aria-label="Свойства"><svg class="size-[19px]"><use href="#props"/></svg></button>
        <button class="w-[40px] flex items-center justify-center bg-[#d0d0d0] border border-l-0 border-[#999]" aria-label="Конфигурации"><svg class="size-[19px]"><use href="#config"/></svg></button>
        <button class="w-[40px] flex items-center justify-center bg-[#d0d0d0] border border-l-0 border-[#999]" aria-label="DimXpert"><svg class="size-[18px]"><use href="#target"/></svg></button>
        <button class="w-[40px] flex items-center justify-center bg-[#d0d0d0] border border-l-0 border-[#999]" aria-label="Отображение"><svg class="size-[19px]"><use href="#ball"/></svg></button>
        <button class="flex-1 flex items-center justify-center pl-1 text-[#555]" aria-label="Ещё"><svg class="size-[10px]"><use href="#chev"/></svg></button>
      </div>
      <label class="ml-1 mr-[5px] h-[26px] shrink-0 border border-[#c6c6c6] flex items-center pl-[2px]">
        <svg class="size-[18px] shrink-0" viewBox="0 0 18 18"><path d="M1 2h16l-6 8v7l-4-3v-4z" fill="#fff" stroke="#1d4b66" stroke-width="1.300"/><path d="M1 2h16l-3 4H4z" fill="#3b93bd"/></svg>
        <input class="flex-1 min-w-0 bg-transparent outline-none" aria-label="Фильтр дерева">
      </label>
      <div class="flex flex-1 min-h-0">
        <div class="flex-1 min-w-0 overflow-hidden">
          <div class="h-[22px] pl-1 flex items-center gap-1 whitespace-pre"><svg class="size-[18px] shrink-0"><use href="#part"/></svg><span>Циклон ЦН-40  (СЦН40-0900х4&lt;К</span></div>
          <ul id="tree"></ul>
        </div>
        <div class="w-[15px] mr-[2px] bg-[#efefef] flex flex-col items-center text-[#555]">
          <svg class="size-[9px] my-[4px] shrink-0 -rotate-90"><use href="#chev"/></svg>
          <div class="w-full h-[367px] bg-[#cdcdcd]"></div>
          <svg class="size-[9px] mt-auto mb-[6px] shrink-0 rotate-90"><use href="#chev"/></svg>
        </div>
      </div>
      <div class="h-[15px] shrink-0 mb-[6px] mr-[2px] bg-[#efefef] flex items-center text-[#555] pl-1 pr-5"><svg class="size-[9px] rotate-180"><use href="#chev"/></svg><div class="ml-1 h-full w-[76px] bg-[#cdcdcd]"></div><svg class="size-[9px] ml-auto"><use href="#chev"/></svg></div>
    </aside>

    <!-- Graphics canvas -->
    <div class="relative flex-1 min-w-0">
      <button class="absolute left-[-1px] top-[402px] w-[10px] h-[39px] bg-white border border-[#999] border-l-0 flex items-center justify-center" aria-label="Скрыть панель"><span class="size-[6px] rounded-full border border-[#888]"></span></button>

      <svg class="absolute left-[630px] top-5 w-[340px] h-[846px]" viewBox="0 0 1020 2538" stroke="#141414" stroke-width="4" stroke-linejoin="round" role="img" aria-label="Модель циклона ЦН-40">
        <defs>
          <linearGradient id="hat" gradientUnits="userSpaceOnUse" x1="150" y1="300" x2="850" y2="-120"><stop offset="0" stop-color="#bbb7b4"/><stop offset=".2" stop-color="#b3afac"/><stop offset=".42" stop-color="#cfccc9"/><stop offset=".52" stop-color="#e2dfdb"/><stop offset=".6" stop-color="#fffdf4"/><stop offset=".68" stop-color="#e6dfd6"/><stop offset=".82" stop-color="#b9b2ac"/></linearGradient>
          <linearGradient id="drum"><stop offset="0" stop-color="#484847"/><stop offset=".12" stop-color="#6e6c6a"/><stop offset=".5" stop-color="#83807d"/><stop offset=".85" stop-color="#7c7977"/><stop offset="1" stop-color="#6a6765"/></linearGradient>
          <linearGradient id="cyl"><stop offset="0" stop-color="#4b4b49"/><stop offset=".14" stop-color="#686664"/><stop offset=".5" stop-color="#807d7a"/><stop offset=".85" stop-color="#868380"/><stop offset="1" stop-color="#74716f"/></linearGradient>
          <linearGradient id="cone"><stop offset="0" stop-color="#484746"/><stop offset=".3" stop-color="#62605e"/><stop offset=".65" stop-color="#73706e"/><stop offset="1" stop-color="#615f5c"/></linearGradient>
          <linearGradient id="hopper"><stop offset="0" stop-color="#343434"/><stop offset=".35" stop-color="#464646"/><stop offset=".5" stop-color="#575350"/><stop offset=".62" stop-color="#4d4d4d"/><stop offset="1" stop-color="#353535"/></linearGradient>
          <filter id="soft" x="-20%" y="-20%" width="140%" height="140%"><feGaussianBlur stdDeviation="15"/></filter>
        </defs>
        <path d="M55 2310Q90 2260 150 2252L275 2240 235 2202Q300 2180 370 2200L630 2180Q700 2175 730 2220 770 2255 890 2250 860 2290 870 2320 960 2360 945 2392 860 2420 820 2445 780 2500 720 2512 640 2495 590 2515 470 2550 340 2520 250 2450 180 2440L80 2438 140 2400Q130 2360 55 2310z" fill="#3c3c3c" stroke="none" filter="url(#soft)"/>
        <!-- hopper -->
        <ellipse cx="500" cy="2348" rx="68" ry="26" fill="#c9c6c3"/>
        <path d="M110 1810L440 2330Q500 2370 560 2328L895 1805z" fill="url(#hopper)"/>
        <path d="M450 2335v12q50 26 102 0v-12" fill="#777"/>
        <!-- base disc -->
        <path d="M890 1712l22 2-4 10h-18z" fill="#777"/>
        <path d="M109 1737v72A393 134 0 0 0 895 1809v-72z" fill="url(#drum)"/>
        <ellipse cx="502" cy="1737" rx="393" ry="133" fill="#c8c5c2"/>
        <path d="M420 1700v30q20 30 90 30 90 0 98-40v-30z" fill="#72706d"/>
        <ellipse cx="525" cy="1688" rx="91" ry="42" fill="#d0cdca"/>
        <path d="M515 1660l22 15M525 1675l10-6" fill="none"/>
        <!-- brackets -->
        <path d="M78 1865l60-42 2 32 42 0 2 26-64 13z" fill="#5b5958"/><path d="M78 1863l62-10 18 12-40 26z" fill="#c8c5c2"/><path d="M120 1892l62-44v32M138 1823v30" fill="none"/><circle cx="117" cy="1873" r="5" fill="#444"/>
        <path d="M672 1892l38 58 76-14-40-58v28" fill="#5f5d5b"/><path d="M690 1920l68-10 26 24-74 16z" fill="#c8c5c2"/><path d="M672 1892v38l38 20M746 1878v34l40 24z" fill="#5f5d5b"/><circle cx="738" cy="1933" r="6" fill="#444"/>
        <!-- rear cyclone -->
        <path d="M527 1510v120q20 16 62 15 54-3 61-22v-125z" fill="url(#cyl)"/><ellipse cx="589" cy="1510" rx="61" ry="20" fill="#c8c5c2"/>
        <path d="M560 650h100v720l-28 145q-40 25-80 12l-20-130z" fill="url(#cyl)"/>
        <path d="M590 1088l70-3M596 1528l8-50 10 50M625 1505l8-30 2 30M550 1532h54" fill="none" stroke-width="6"/>
        <!-- left cyclone -->
        <path d="M135 1580v128q10 24 78 26 70-2 79-24v-130z" fill="url(#cyl)"/><ellipse cx="213" cy="1580" rx="79" ry="28" fill="#c8c5c2"/>
        <path d="M50 1120L157 1582q60 28 118-2L350 1240V1100z" fill="url(#cone)"/>
        <path d="M150 1590l8-50 12 50M240 1600l6-52 8 52M270 1585l6-45 10 40" fill="#555" stroke-width="5"/>
        <path d="M42 482L50 1120Q90 1155 220 1157L380 1150V482z" fill="url(#cyl)"/>
        <ellipse cx="205" cy="478" rx="163" ry="36" fill="#cbc8c5"/>
        <path d="M150 430v55q45 10 90 3v-60z" fill="url(#cyl)"/><path d="M68 495l82-50v38zM238 460l45 46-45-22z" fill="#777471"/>
        <!-- duct -->
        <path d="M492 480h250v100l-90 270-60-40-100-140z" fill="#4f4e4e"/>
        <path d="M492 488l60-6 200 82-108 10z" fill="#c5c2bf"/><path d="M530 486l180 84" fill="none"/>
        <path d="M590 690l55 14v120l-50-15zM560 485l180-5v70l-40 8z" fill="#6f6d6b"/>
        <path d="M740 480v78" stroke="#eee"/>
        <!-- right cyclone -->
        <ellipse cx="794" cy="1747" rx="80" ry="30" fill="#d8d5d2"/>
        <path d="M637 1280L737 1747q55 28 123-3L962 1280z" fill="url(#cone)"/>
        <path d="M640 600L637 1282Q700 1325 800 1325 920 1322 962 1282L973 640z" fill="url(#cyl)"/>
        <path d="M770 655Q800 612 870 612 970 615 973 640 955 680 845 678 800 676 770 670z" fill="#cbc8c5"/>
        <path d="M875 545l70 70-70 10z" fill="#84817e"/>
        <path d="M748 470h125v180q-55 12-125 0z" fill="url(#cyl)"/><path d="M843 552l55 122-55-20z" fill="#6a6866"/>
        <path d="M843 460q40 20 50 0l-18-18v-20h-30zM843 470q30 18 48-8" fill="#bbb8b5"/>
        <path d="M730 1765l10-52 8 50zM824 1768l6-50 10 50zM852 1752l6-40 8 36z" fill="#555" stroke-width="5"/>
        <!-- duct frame -->
        <path d="M645 572l110-18v250l-110 45z" fill="#5d5b5a"/>
        <path d="M665 690l40 12 45-12-20-15M665 822l45 8 40-16-42-5z" fill="#d0cdca"/>
        <path d="M645 570h18v280l-18 5zM755 552h17v280l-17 4zM663 565l92-12v17l-92 13zM663 832l92-12v16l-92 15z" fill="#aaa7a4"/>
        <path d="M708 578v252M665 708l90-12" stroke-width="7" fill="none"/>
        <!-- front cyclone -->
        <ellipse cx="428" cy="1828" rx="81" ry="31" fill="#d8d5d2"/>
        <path d="M263 1355L370 1835q60 22 120 0L592 1355z" fill="url(#cone)"/>
        <path d="M362 1840l8-42 10 42M456 1848l6-52 8 50M486 1832l6-42 6 38" fill="#444" stroke-width="5"/>
        <path d="M255 690L263 1358Q320 1398 428 1397 540 1395 592 1355L593 690z" fill="url(#cyl)"/>
        <ellipse cx="424" cy="690" rx="169" ry="51" fill="#cbc8c5"/>
        <path d="M257 712l26 22v108l-26-22z" fill="#6a6866"/>
        <path d="M492 600l80 74-80 12z" fill="#84817e"/>
        <path d="M362 480h130v225q-60 15-130-2z" fill="url(#cyl)"/><path d="M370 610v100l-82 8zM460 612l52 124-52-28z" fill="#84817e"/>
        <ellipse cx="428" cy="515" rx="85" ry="22" fill="#c5c2bf"/><path d="M362 465h132v50q-66 22-132 0z" fill="url(#cyl)"/><path d="M345 522q80 28 166 0" stroke-width="7" fill="none"/>
        <!-- top drum and hat -->
        <path d="M95 285V400A410 87 0 0 0 915 400V285z" fill="url(#drum)"/>
        <path d="M382 90L125 240Q95 262 95 285 110 365 505 374 900 365 915 285 915 265 880 238L628 90z" fill="url(#hat)"/>
        <path d="M620 366l225-32v140l-220 31z" fill="#83807d"/><path d="M622 368v98" stroke-width="8"/>
        <path d="M686 424q40 8 95-10-10 16-45 14-30 2-50-4z" fill="#777" stroke-width="3" stroke-dasharray="12 3"/>
        <ellipse cx="505" cy="75" rx="130" ry="29" fill="#bdbab7"/><path d="M388 84v10q117 42 234 0v-10" fill="#8a8785"/><ellipse cx="507" cy="73" rx="115" ry="25" fill="#a19e9b"/><path d="M400 88q105-40 212 0-105 30-212 0z" fill="#54504c"/><ellipse cx="505" cy="76" rx="112" ry="24" fill="none" stroke-dasharray="9 3" stroke-width="5"/>
      </svg>

      <svg class="absolute left-[20px] top-[762px] w-[70px] h-[64px] font-['Liberation_Serif',serif]" viewBox="0 0 70 64" font-size="13"><path d="M20 46V22" stroke="#1a7a26" stroke-width="4"/><path d="M15 28l5-11 5 11z" fill="#1a7a26"/><path d="M20 46l20-4" stroke="#b01c1c" stroke-width="4"/><path d="M38 36l9 5-8 6z" fill="#b01c1c"/><path d="M20 46l10 6" stroke="#1a1ab0" stroke-width="5"/><path d="M26 54l8-6 2 7z" fill="#1a1ab0"/><circle cx="20" cy="47" r="3" fill="#1d3346"/><text x="15" y="15" fill="#1a7a26">Y</text><text x="45" y="45" fill="#c02020">X</text><text x="33" y="59" fill="#1a1a90">Z</text></svg>

      <button class="absolute right-[2px] bottom-[5px] size-[29px] rounded bg-[#50565a]" aria-label="Повернуть вид"><svg class="size-[29px]" viewBox="0 0 29 29" fill="none" stroke="#e8e8e8" stroke-width="2"><path d="M12 24A10 10 0 0 1 12 5M17 5a10 10 0 0 1 0 19M10 3l3 2-1 3M19 26l-3-2 1-3"/></svg></button>
    </div>
  </div>

  <!-- View toolbar over the canvas -->
  <div class="absolute left-[897px] top-[5px] flex items-center h-5 text-[#999] opacity-80">
    <div class="flex gap-[7px]">
      <button aria-label="Во весь экран"><svg class="size-[19px]"><use href="#zoomfit"/></svg></button>
      <button aria-label="Увеличить область"><svg class="size-[19px]"><use href="#zoomarea"/></svg></button>
      <button aria-label="Предыдущий вид"><svg class="size-[19px]"><use href="#prevview"/></svg></button>
      <button aria-label="Разрез"><svg class="size-[19px]"><use href="#section"/></svg></button>
      <button aria-label="Динамические виды"><svg class="size-[19px]"><use href="#dynview"/></svg></button>
    </div>
    <button class="flex items-center ml-[6px] gap-[8px]" aria-label="Ориентация"><svg class="size-[19px]"><use href="#vieworient"/></svg><svg class="size-[5px]"><use href="#tri"/></svg></button>
    <button class="flex items-center ml-[9px] gap-[8px]" aria-label="Стиль отображения"><svg class="size-[19px]"><use href="#display"/></svg><svg class="size-[5px]"><use href="#tri"/></svg></button>
    <button class="flex items-center ml-[8px] gap-[8px]" aria-label="Скрыть"><svg class="size-[19px]"><use href="#eye"/></svg><svg class="size-[5px]"><use href="#tri"/></svg></button>
    <button class="ml-[8px]" aria-label="Внешний вид"><svg class="size-[19px]"><use href="#appear"/></svg></button>
    <button class="flex items-center ml-[7px] gap-[8px]" aria-label="Сцена"><svg class="size-[19px]"><use href="#scene"/></svg><svg class="size-[5px]"><use href="#tri"/></svg></button>
    <button class="flex items-center ml-[8px] gap-[8px]" aria-label="Параметры вида"><svg class="size-[19px]"><use href="#monitor"/></svg><svg class="size-[5px]"><use href="#tri"/></svg></button>
  </div>
  <div class="absolute right-[9px] top-[7px] flex items-center gap-[13px] text-[#8f8f8f]">
    <button class="w-[13px] h-[15px] border border-[#999] flex items-center justify-center" aria-label="Влево"><svg class="size-[7px] rotate-90"><use href="#tri"/></svg></button>
    <button class="w-[13px] h-[15px] border border-[#999] flex items-center justify-center" aria-label="Вправо"><svg class="size-[7px] -rotate-90"><use href="#tri"/></svg></button>
    <button class="w-[11px] h-[12px] border-b-3 border-[#999]" aria-label="Свернуть документ"></button>
    <button class="size-[14px]" aria-label="Восстановить документ"><svg class="size-[14px]"><use href="#restore"/></svg></button>
    <button class="size-[14px]" aria-label="Закрыть документ"><svg class="size-[14px]"><use href="#cross"/></svg></button>
  </div>
  <div class="absolute right-0 top-[76px] w-[22px] h-[168px] grid grid-rows-7 border border-r-0 border-[#999] divide-y divide-[#999] bg-[#d4d4d4] [&>button]:flex [&>button]:items-center [&>button]:justify-center overflow-hidden">
    <button aria-label="Ресурсы"><svg class="size-[18px]"><use href="#home"/></svg></button>
    <button aria-label="Библиотека"><svg class="size-[18px]"><use href="#library"/></svg></button>
    <button aria-label="Проводник"><svg class="size-[18px]"><use href="#explorer"/></svg></button>
    <button aria-label="Палитра видов"><svg class="size-[18px]"><use href="#palette"/></svg></button>
    <button class="bg-white" aria-label="Внешние виды"><svg class="size-[17px]"><use href="#ball"/></svg></button>
    <button aria-label="Настраиваемые свойства"><svg class="size-[18px]"><use href="#props"/></svg></button>
    <button aria-label="Форум"><svg class="size-[18px]"><use href="#forum"/></svg></button>
  </div>
</main>

<!-- Model tabs -->
<div class="h-4 shrink-0 flex bg-[#f7f7f7] border-y border-[#8a8a8a] leading-[11px]">
  <div class="ml-[27px] w-[65px] grid grid-cols-4 divide-x divide-[#b0b0b0] bg-[#9b9b9b] text-[#777]">
    <button class="flex items-center justify-center" aria-label="В начало"><svg class="size-2 rotate-90"><use href="#tri"/></svg></button>
    <button class="flex items-center justify-center" aria-label="Назад"><svg class="size-2 rotate-90"><use href="#tri"/></svg></button>
    <button class="flex items-center justify-center" aria-label="Вперёд"><svg class="size-2 -rotate-90"><use href="#tri"/></svg></button>
    <button class="flex items-center justify-center" aria-label="В конец"><svg class="size-2 -rotate-90"><use href="#tri"/></svg></button>
  </div>
  <button class="w-[67px] pl-1 pb-[2px] font-bold">Модель</button>
  <button class="w-[126px] pb-[2px] bg-[#d4d4d4] border-x border-[#999]">Трехмерные виды</button>
  <button class="w-[182px] pb-[2px] bg-[#d4d4d4] border-r border-[#999] px-[14px] text-left whitespace-nowrap">Исследование движения 1</button>
</div>

<!-- Status bar -->
<footer class="h-[14px] shrink-0 overflow-hidden flex bg-[#f7f7f7] pt-[2px] leading-[14px] whitespace-nowrap">
  <span class="pl-px">SOLIDWORKS Premium 2018 SP4.0</span>
  <span class="ml-auto w-2 border-l border-[#ccc]"></span>
  <span class="w-[131px] border-x border-[#ccc] pl-1">Редактируется Деталь</span>
  <span class="ml-[15px] w-[105px] border-l border-[#ccc] pl-[42px]">ММГС</span>
  <svg class="size-[5px] mt-1 rotate-180"><use href="#tri"/></svg>
  <svg class="ml-[68px] w-[16px] h-[14px]" viewBox="0 0 16 14"><path d="M1 1l12 3 3 6-5 4-9-7z" fill="#ddd" stroke="#333"/><circle cx="6" cy="5" r="3" fill="none" stroke="#333"/></svg>
</footer>

<!-- Site watermark -->
<div class="absolute left-[2px] top-[2px] z-20 flex items-start pointer-events-none select-none whitespace-nowrap text-transparent [-webkit-text-stroke:1px_#f4f4f4] drop-shadow-[1px_1px_0_#707070]" aria-hidden="true">
  <span class="flex gap-[11px] text-[64px] leading-[68px] font-['Noto_Sans_CJK_SC',sans-serif] mr-[3px]"><span>莫</span><span>西</span><span>网</span></span>
  <span class="text-[59px] leading-[84px] font-['Liberation_Mono',monospace]">www.3dmox.com</span>
</div>

<script>
  const rows = [
    ['history', 'История'], ['sensor', 'Датчики'], ['notes', 'Примечания', 1], ['cutlist', 'Список вырезов(74)', 1],
    ['equation', 'Уравнения'], ['material', 'AISI 1020'], ['plane', 'Спереди'], ['plane', 'Сверху'], ['plane', 'Справа'],
    ['origin', 'Исходная точка'], ['weld', 'Сварная деталь'], ['revolve', 'Повернуть1', 1], ['sketch', 'Эскиз2'],
    ['construct', 'Конструкция1', 1], ['extrude', 'Бобышка-Вытянуть1', 1], ['extrude', 'Бобышка-Вытянуть2', 1],
    ['sweep', 'По траектории1', 1], ['mirror', 'Зеркальное отражение1'], ['sketch3d', 'Трехмерный эскиз3'],
    ['plane', 'Плоскость2'], ['sketch', 'Эскиз12'], ['plane', 'Плоскость3'], ['revolve', 'Повернуть2', 1],
    ['extrude', 'Бобышка-Вытянуть3', 1], ['circular', 'Круговой массив1'], ['sweep', 'По траектории3', 1],
    ['extrude', 'Бобышка-Вытянуть4', 1], ['shell', 'Оболочка4'], ['extrude', 'Вытянуть-Тонкостенный2', 1],
    ['mirror', 'Зеркальное отражение2'], ['plane', 'Плоскость4'], ['revolve', 'Повернуть3', 1],
    ['extrude', 'Бобышка-Вытянуть5', 1], ['circular', 'Круговой массив2']
  ];
  document.getElementById('tree').innerHTML = rows.map(([icon, label, open]) =>
    `<li class="h-[22px] flex items-center whitespace-nowrap pl-2"><span class="w-[18px] text-[#555]">${open ? '<svg class="size-[6px] -rotate-90"><use href="#tri"/></svg>' : ''}</span><svg class="size-[18px] mr-[5px] shrink-0"><use href="#${icon}"/></svg>${label}</li>`).join('');
</script>
</body>
</html>
